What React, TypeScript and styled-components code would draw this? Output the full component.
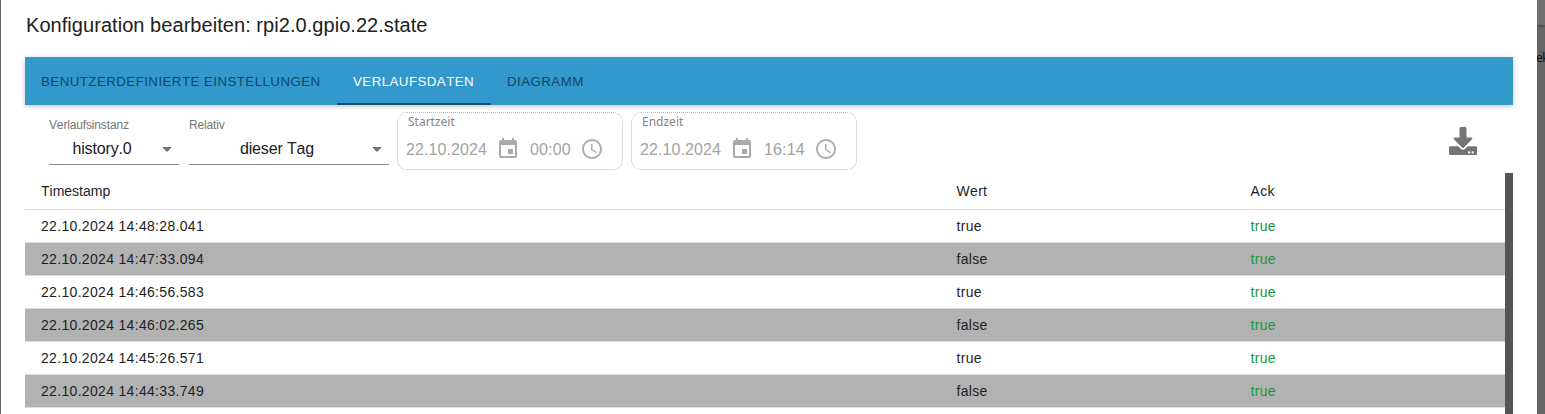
import React from 'react';
import styled, { createGlobalStyle } from 'styled-components';

const Global = createGlobalStyle`
  * { box-sizing: border-box; }
  body { margin: 0; background: #666; overflow: hidden; }
`;
const Page = styled.div`
  display: flex;
  height: 414px;
  overflow: hidden;
  font-family: 'Liberation Sans', Arial, sans-serif;
  font-kerning: none;
  color: #212121;
`;
const LeftEdge = styled.div`
  width: 1px;
  flex: none;
  background: #666;
`;
const Dialog = styled.main`
  flex: 1;
  min-width: 0;
  padding: 0 24px;
  background: #fff;
`;
const Backdrop = styled.aside`
  width: 8px;
  flex: none;
  overflow: hidden;
  background: #666;
`;
const BackdropBar = styled.div`
  height: 25px;
  background: #717171;
  box-shadow: 0 1px 3px #3a3a3a;
`;
const BackdropText = styled.div`
  margin: 26px 0 0 -1px;
  font: 12px/14px 'Noto Sans', sans-serif;
  letter-spacing: -0.4px;
  color: #0c0c0c;
  white-space: nowrap;
`;
const Title = styled.h1`
  margin: 0;
  height: 57px;
  padding: 9px 0 0 1px;
  font-size: 20px;
  font-weight: 400;
  line-height: 32px;
  letter-spacing: 0.05px;
`;
const Tabs = styled.nav`
  display: flex;
  height: 48px;
  background: #3399cc;
  box-shadow: 0 2px 4px -1px rgba(0, 0, 0, 0.12), 0 1px 6px rgba(0, 0, 0, 0.16);
`;
const Tab = styled.div<{ $width: number; $active?: boolean }>`
  width: ${(p) => p.$width}px;
  height: 48px;
  padding: 1px 16px 0;
  font-size: 13.3px;
  letter-spacing: 0.45px;
  line-height: 48px;
  white-space: nowrap;
  color: ${(p) => (p.$active ? '#fff' : '#0f4767')};
  border-bottom: 2px solid ${(p) => (p.$active ? '#164f70' : 'transparent')};
`;
const Toolbar = styled.div`
  display: flex;
  height: 68px;
  padding-left: 24px;
`;
const SelectField = styled.div<{ $width: number }>`
  width: ${(p) => p.$width}px;
  height: 60px;
  margin-right: 10px;
  padding-top: 12px;
  border-bottom: 1px solid #8c8c8c;

  & + & {
    margin-right: 8px;
  }
`;
const FieldLabel = styled.div`
  font-size: 12px;
  line-height: 16px;
  letter-spacing: -0.15px;
  color: #757575;
`;
const SelectValue = styled.div`
  display: flex;
  align-items: center;
  height: 31px;
  padding-right: 7px;
  font-size: 16px;
  letter-spacing: -0.15px;
`;
const SelectText = styled.span`
  flex: 1;
  padding-right: 7px;
  text-align: center;
`;
const Caret = styled.span`
  margin-top: 1px;
  border: 5px solid transparent;
  border-top-color: #757575;
  border-bottom: 0;
`;
const TimeGroup = styled.div`
  width: 226px;
  height: 58px;
  margin: 7px 8px 0 0;
  padding: 0 8px;
  border: 1px dotted #b8b8b8;
  border-radius: 10px;
`;
const TimeLabel = styled.div`
  padding-left: 2px;
  font: 12px/18px 'Noto Sans', sans-serif;
  color: #858585;
`;
const TimeRow = styled.div`
  display: flex;
  align-items: center;
  height: 36px;
  font-size: 16px;
  color: #a3a3a3;
`;
const DateText = styled.span`
  width: 90px;
  padding-top: 1px;
  letter-spacing: 0.1px;
`;
const ClockText = styled.span`
  width: 50px;
  margin-left: 10px;
  padding-top: 1px;
  letter-spacing: 0.15px;
`;
const Icon = styled.svg`
  display: block;
  flex: none;
`;
const Download = styled.div`
  margin: 22px 36px 0 auto;
`;
const TableArea = styled.div`
  display: flex;
  height: 241px;
`;
const Table = styled.div`
  flex: 1;
`;
const Row = styled.div<{ $head?: boolean; $dark?: boolean }>`
  display: grid;
  grid-template-columns: 915.5px 294px 1fr;
  height: ${(p) => (p.$head ? 37 : 33)}px;
  padding-left: 16px;
  font-size: 14px;
  line-height: ${(p) => (p.$head ? 36 : 33)}px;
  color: #1e1e1e;
  background: ${(p) => (p.$dark ? '#b2b2b2' : '#fff')};
  border-bottom: 1px solid #dedede;
`;
const Cell = styled.span<{ $spacing?: number; $green?: boolean }>`
  letter-spacing: ${(p) => p.$spacing ?? 0.32}px;
  color: ${(p) => (p.$green ? '#179a32' : 'inherit')};
`;
const Scrollbar = styled.div`
  width: 8px;
  background: #555;
`;

const CalendarIcon = () => (
  <Icon width="24" height="24" viewBox="0 0 24 24" fill="#a9a9a9">
    <path d="M17 12h-5v5h5v-5zM16 1v2H8V1H6v2H5c-1.11 0-1.99.9-1.99 2L3 19c0 1.1.89 2 2 2h14c1.1 0 2-.9 2-2V5c0-1.1-.9-2-2-2h-1V1h-2zm3 18H5V8h14v11z" />
  </Icon>
);
const ClockIcon = () => (
  <Icon width="24" height="24" viewBox="0 0 24 24" fill="#b0b0b0">
    <path d="M11.99 2C6.47 2 2 6.48 2 12s4.47 10 9.99 10C17.52 22 22 17.52 22 12S17.52 2 11.99 2zM12 20c-4.42 0-8-3.58-8-8s3.58-8 8-8 8 3.58 8 8-3.58 8-8 8z" />
    <path d="M12.5 7H11v6l5.25 3.15.75-1.23-4.5-2.67z" />
  </Icon>
);
const DownloadIcon = () => (
  <Icon width="28" height="28" viewBox="0 0 512 512" fill="#757575">
    <path d="M216 0h80c13.3 0 24 10.7 24 24v168h87.7c17.8 0 26.7 21.5 14.1 34.1L269.7 378.3c-7.5 7.5-19.8 7.5-27.3 0L90.1 226.1c-12.6-12.6-3.7-34.1 14.1-34.1H192V24c0-13.3 10.7-24 24-24zm296 376v112c0 13.3-10.7 24-24 24H24c-13.3 0-24-10.7-24-24V376c0-13.3 10.7-24 24-24h146.7l49 49c20.1 20.1 52.5 20.1 72.6 0l49-49H488c13.3 0 24 10.7 24 24zm-124 88c0-11-9-20-20-20s-20 9-20 20 9 20 20 20 20-9 20-20zm64 0c0-11-9-20-20-20s-20 9-20 20 9 20 20 20 20-9 20-20z" />
  </Icon>
);

const Period = ({ label, date, time }: { label: string; date: string; time: string }) => (
  <TimeGroup>
    <TimeLabel>{label}</TimeLabel>
    <TimeRow>
      <DateText>{date}</DateText>
      <CalendarIcon />
      <ClockText>{time}</ClockText>
      <ClockIcon />
    </TimeRow>
  </TimeGroup>
);

const rows = [
  ['22.10.2024 14:48:28.041', 'true'],
  ['22.10.2024 14:47:33.094', 'false'],
  ['22.10.2024 14:46:56.583', 'true'],
  ['22.10.2024 14:46:02.265', 'false'],
  ['22.10.2024 14:45:26.571', 'true'],
  ['22.10.2024 14:44:33.749', 'false'],
];

export default function App() {
  return (
    <>
      <Global />
      <Page>
        <LeftEdge />
        <Dialog>
          <Title>Konfiguration bearbeiten: rpi2.0.gpio.22.state</Title>
          <Tabs>
            <Tab $width={312}>BENUTZERDEFINIERTE EINSTELLUNGEN</Tab>
            <Tab $width={154} $active>VERLAUFSDATEN</Tab>
            <Tab $width={110}>DIAGRAMM</Tab>
          </Tabs>
          <Toolbar>
            <SelectField $width={130}>
              <FieldLabel>Verlaufsinstanz</FieldLabel>
              <SelectValue><SelectText>history.0</SelectText><Caret /></SelectValue>
            </SelectField>
            <SelectField $width={200}>
              <FieldLabel>Relativ</FieldLabel>
              <SelectValue><SelectText>dieser Tag</SelectText><Caret /></SelectValue>
            </SelectField>
            <Period label="Startzeit" date="22.10.2024" time="00:00" />
            <Period label="Endzeit" date="22.10.2024" time="16:14" />
            <Download><DownloadIcon /></Download>
          </Toolbar>
          <TableArea>
            <Table>
              <Row $head>
                <Cell $spacing={0}>Timestamp</Cell>
                <Cell>Wert</Cell>
                <Cell>Ack</Cell>
              </Row>
              {rows.map(([ts, value], i) => (
                <Row key={ts} $dark={i % 2 === 1}>
                  <Cell>{ts}</Cell>
                  <Cell>{value}</Cell>
                  <Cell $green>true</Cell>
                </Row>
              ))}
            </Table>
            <Scrollbar />
          </TableArea>
        </Dialog>
        <Backdrop>
          <BackdropBar />
          <BackdropText>ek</BackdropText>
        </Backdrop>
      </Page>
    </>
  );
}
